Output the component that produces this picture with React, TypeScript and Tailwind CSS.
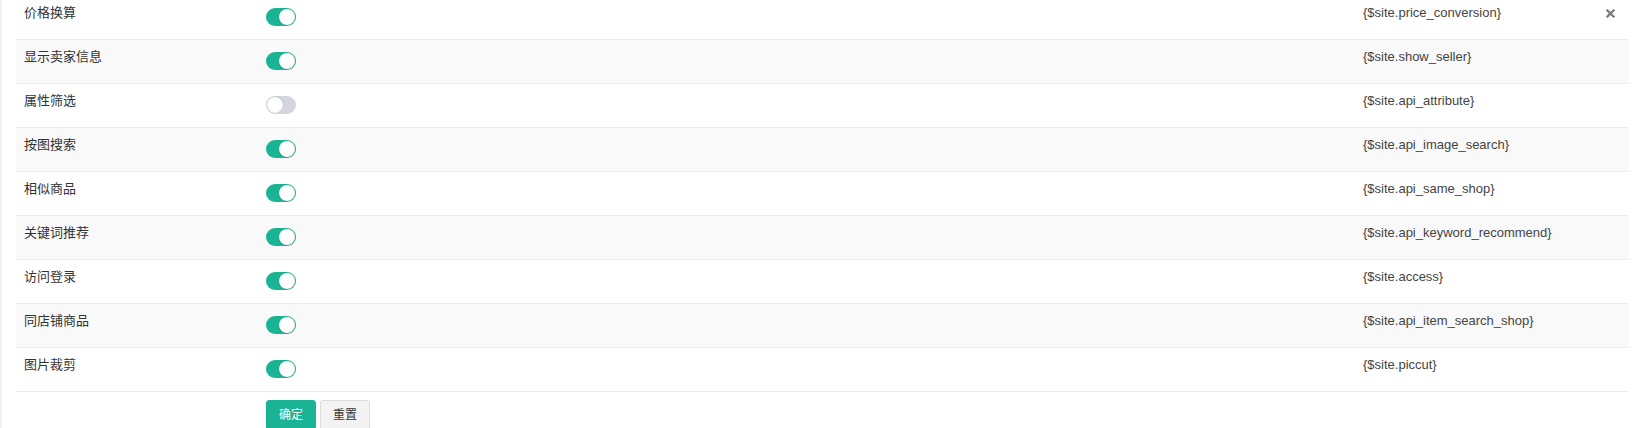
import React, { useState } from "react";

// 站点功能开关列表
const FONT = { fontFamily: '"Liberation Sans", Arial, "Noto Sans CJK SC", sans-serif' };

interface Item {
  label: string;
  tag: string;
  on: boolean;
}

const ITEMS: Item[] = [
  { label: "价格换算", tag: "{$site.price_conversion}", on: true },
  { label: "显示卖家信息", tag: "{$site.show_seller}", on: true },
  { label: "属性筛选", tag: "{$site.api_attribute}", on: false },
  { label: "按图搜索", tag: "{$site.api_image_search}", on: true },
  { label: "相似商品", tag: "{$site.api_same_shop}", on: true },
  { label: "关键词推荐", tag: "{$site.api_keyword_recommend}", on: true },
  { label: "访问登录", tag: "{$site.access}", on: true },
  { label: "同店铺商品", tag: "{$site.api_item_search_shop}", on: true },
  { label: "图片裁剪", tag: "{$site.piccut}", on: true },
];

function Toggle({ on, onClick }: { on: boolean; onClick: () => void }) {
  return (
    <button
      onClick={onClick}
      className={`relative block w-[30px] h-[18px] rounded-full ${on ? "bg-[#1ab394]" : "bg-[#d3d6de]"}`}
    >
      <span
        className={`absolute top-[1px] w-[16px] h-[16px] rounded-full bg-white shadow-[0_0_1px_rgba(0,0,0,0.35)] ${on ? "left-[13px]" : "left-[1px]"}`}
      />
    </button>
  );
}

function CloseIcon() {
  return (
    <svg width="9" height="9" viewBox="0 0 9 9" className="block">
      <path d="M1.5 1.5 L7.5 7.5 M7.5 1.5 L1.5 7.5" stroke="#7a7d82" strokeWidth="2.3" strokeLinecap="square" />
    </svg>
  );
}

export default function App() {
  const [items, setItems] = useState(ITEMS);

  const flip = (i: number) =>
    setItems(prev => prev.map((it, k) => (k === i ? { ...it, on: !it.on } : it)));

  return (
    <div className="h-[428px] w-[1638px] overflow-hidden bg-white flex text-[13px] text-[#333]" style={FONT}>
      <div className="w-[2px] bg-[#eef0f3]" />
      <div className="pl-[14px] w-[1627px]">
        <div className="-mt-[5px]">
          {items.map((it, i) => (
            <div
              key={it.tag}
              className={`flex h-[44px] border-t border-[#ebedef] ${i % 2 === 1 ? "bg-[#f9f9f9]" : "bg-white"}`}
            >
              <div className="w-[242px] px-2 pt-[7px] leading-[19px]">{it.label}</div>
              <div className="w-[1097px] px-2 pt-[12px]">
                <Toggle on={it.on} onClick={() => flip(i)} />
              </div>
              <div className="w-[243px] px-2 pt-[7px] leading-[19px] text-[#444]">{it.tag}</div>
              <div className="w-[31px] px-2 pt-[13px]">{i === 0 && <CloseIcon />}</div>
            </div>
          ))}
          <div className="flex border-t border-[#ebedef] pt-2">
            <div className="w-[242px]" />
            <div className="px-2 flex gap-[4px]">
              <button className="h-[30px] px-3 rounded-[3px] border border-[#1ab394] bg-[#1ab394] text-white text-[12px]">
                确定
              </button>
              <button className="h-[30px] px-3 rounded-[3px] border border-[#dcdcdc] bg-[#f3f3f3] text-[#333] text-[12px]">
                重置
              </button>
            </div>
          </div>
        </div>
      </div>
    </div>
  );
}
